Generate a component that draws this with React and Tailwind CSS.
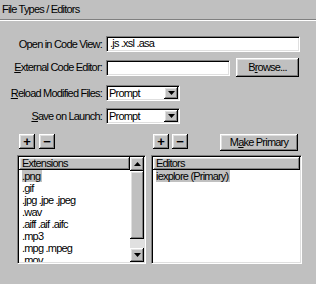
import React from 'react';

const sunken = 'bg-white border border-t-[#808080] border-l-[#808080] border-b-white border-r-white shadow-[inset_1px_1px_0_#000,inset_-1px_-1px_0_#dfdfdf]';
const raised = 'bg-[#c0c0c0] shadow-[inset_-1px_-1px_0_#000,inset_1px_1px_0_#fff,inset_-2px_-2px_0_#808080,inset_2px_2px_0_#dfdfdf]';

const U = ({ children }) => <span className="underline underline-offset-1">{children}</span>;

function Arrow({ down }) {
  return (
    <svg width="7" height="4" viewBox="0 0 7 4">
      <path d={down ? 'M0 0h7L3.5 4z' : 'M0 4h7L3.5 0z'} fill="#000" />
    </svg>
  );
}

function Select({ value }) {
  return (
    <div className={`${sunken} w-[74px] h-[16px] flex items-center justify-between`}>
      <span className="pl-[2px] leading-[12px]">{value}</span>
      <div className={`${raised} w-[14px] h-[12px] mr-[1px] flex items-center justify-center`}>
        <Arrow down />
      </div>
    </div>
  );
}

function SmallBtn({ children }) {
  return (
    <div className={`${raised} w-[16px] h-[15px] flex items-center justify-center text-[13px] leading-none font-bold tracking-normal`}>
      {children}
    </div>
  );
}

function Row({ label, children, className }) {
  return (
    <div className={`flex items-center ${className}`}>
      <div className="w-[104px] text-right pr-[2px] whitespace-nowrap">{label}</div>
      <div className="ml-[2px] flex items-center">{children}</div>
    </div>
  );
}

const extensions = ['.png', '.gif', '.jpg .jpe .jpeg', '.wav', '.aiff .aif .aifc', '.mp3', '.mpg .mpeg', '.mov'];

export default function App() {
  return (
    <div
      className="w-[316px] h-[284px] bg-[#c0c0c0] text-black text-[11px] leading-[13px] tracking-[-0.8px] flex flex-col overflow-hidden"
      style={{ fontFamily: '"Liberation Sans", Arial, sans-serif' }}
    >
      <div className="h-[19px] pl-[2px] pt-[3px]">File Types / Editors</div>
      <div className="h-[2px] border-t border-t-[#808080] border-b border-b-white" />

      <Row label="Open in Code View:" className="mt-[15px] h-[16px]">
        <div className={`${sunken} w-[194px] h-[16px] pl-[3px] leading-[13px]`}>.js .xsl .asa</div>
      </Row>

      <Row label={<><U>E</U>xternal Code Editor:</>} className="mt-[6px] h-[19px]">
        <div className={`${sunken} w-[124px] h-[16px]`} />
        <div className={`${raised} ml-[6px] w-[63px] h-[19px] flex items-center justify-center`}>
          B<U>r</U>owse...
        </div>
      </Row>

      <Row label={<><U>R</U>eload Modified Files:</>} className="mt-[8px] h-[16px]">
        <Select value="Prompt" />
      </Row>

      <Row label={<><U>S</U>ave on Launch:</>} className="mt-[7px] h-[16px]">
        <Select value="Prompt" />
      </Row>

      <div className="flex mt-[10px]">
        <div className="ml-[17px] w-[129px] flex flex-col">
          <div className="h-[17px] flex gap-[4px] pl-[2px]">
            <SmallBtn>+</SmallBtn>
            <SmallBtn>−</SmallBtn>
          </div>
          <div className={`${sunken} mt-[4px] h-[109px] flex p-[1px]`}>
            <div className="flex-1 flex flex-col overflow-hidden">
              <div className={`${raised} h-[13px] shrink-0 pl-[3px] leading-[12px]`}>Extensions</div>
              {extensions.map((e, i) => (
                <div key={e} className="h-[12px] shrink-0 pl-[3px] leading-[12px] whitespace-nowrap">
                  <span className={i === 0 ? 'bg-[#c0c0c0] pr-[2px]' : ''}>{e}</span>
                </div>
              ))}
            </div>
            <div className="w-[14px] flex flex-col">
              <div className={`${raised} h-[14px] flex items-center justify-center`}>
                <Arrow />
              </div>
              <div className={`${raised} h-[68px]`} />
              <div className="flex-1 bg-[#e0e0e0]" />
              <div className={`${raised} h-[14px] flex items-center justify-center`}>
                <Arrow down />
              </div>
            </div>
          </div>
        </div>

        <div className="ml-[5px] w-[151px] flex flex-col">
          <div className="h-[17px] flex items-start">
            <div className="ml-[2px] flex gap-[3px]">
              <SmallBtn>+</SmallBtn>
              <SmallBtn>−</SmallBtn>
            </div>
            <div className={`${raised} ml-[32px] w-[78px] h-[17px] flex items-center justify-center`}>
              M<U>a</U>ke Primary
            </div>
          </div>
          <div className={`${sunken} mt-[4px] h-[109px] flex flex-col p-[1px]`}>
            <div className={`${raised} h-[13px] pl-[3px] leading-[12px]`}>Editors</div>
            <div className="h-[12px] pl-[3px] leading-[12px] whitespace-nowrap">
              <span className="bg-[#c0c0c0] pr-[2px]">iexplore (Primary)</span>
            </div>
          </div>
        </div>
      </div>
    </div>
  );
}
